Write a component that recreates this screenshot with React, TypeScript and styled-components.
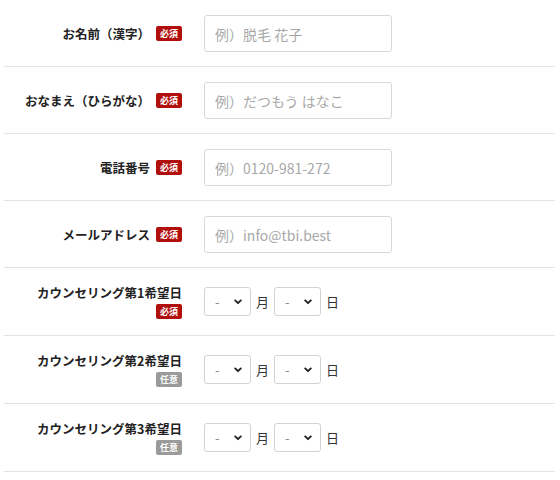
import styled, { createGlobalStyle } from 'styled-components';

const GlobalStyle = createGlobalStyle`
    body {
        margin: 0;
        background: #fff;
        font-family: "Noto Sans CJK JP", "Noto Sans", sans-serif;
        color: #222;
    }
`;

const Form = styled.form`
    width: 551px;
    margin-left: 4px;
`;

const Row = styled.div<{ $tall?: boolean }>`
    display: flex;
    align-items: center;
    padding: 15px 0 ${p => (p.$tall ? '15px' : '14px')};
    border-bottom: 1px solid #e4e4e4;
    min-height: 37px;
`;

const Label = styled.div<{ $stacked?: boolean }>`
    width: 178px;
    flex-shrink: 0;
    display: flex;
    flex-direction: ${p => (p.$stacked ? 'column' : 'row')};
    justify-content: flex-end;
    align-items: ${p => (p.$stacked ? 'flex-end' : 'center')};
    gap: ${p => (p.$stacked ? '3px' : '6px')};
    font-size: 12.5px;
    font-weight: 700;
    line-height: 16px;
    white-space: nowrap;
`;

const Badge = styled.span<{ $optional?: boolean }>`
    display: inline-flex;
    align-items: center;
    justify-content: center;
    width: 26px;
    height: 15px;
    border-radius: 2px;
    background: ${p => (p.$optional ? '#9a9a9a' : '#b10f0b')};
    color: #fff;
    font-size: 9px;
    font-weight: 700;
    line-height: 1;
`;

const Field = styled.div`
    margin-left: 22px;
    display: flex;
    align-items: center;
    gap: 5px;
    font-size: 13px;
    color: #333;
`;

const TextInput = styled.input`
    box-sizing: border-box;
    width: 188px;
    height: 37px;
    padding: 0 10px;
    border: 1px solid #d8d8d8;
    border-radius: 3px;
    font-family: inherit;
    font-size: 14px;
    color: #333;
    outline: none;

    &::placeholder {
        color: #a8a8a8;
    }
`;

const SelectWrap = styled.div`
    position: relative;
    width: 47px;
    height: 29px;

    svg {
        position: absolute;
        right: 9px;
        top: 50%;
        transform: translateY(-50%);
        pointer-events: none;
    }
`;

const Select = styled.select`
    box-sizing: border-box;
    appearance: none;
    width: 100%;
    height: 100%;
    padding: 0 0 0 10px;
    border: 1px solid #d2d2d2;
    border-radius: 3px;
    background: #fff;
    font-family: inherit;
    font-size: 13px;
    color: #888;
    outline: none;
`;

const Unit = styled.span`
    font-size: 13px;
    color: #333;
`;

const Chevron = () => (
    <svg width="8" height="6" viewBox="0 0 8 6">
        <path d="M1.2 1.4 L4 4.2 L6.8 1.4" fill="none" stroke="#222" strokeWidth="1.9" strokeLinecap="round" strokeLinejoin="round" />
    </svg>
);

const DateSelect = () => (
    <SelectWrap>
        <Select defaultValue="">
            <option value="">-</option>
        </Select>
        <Chevron />
    </SelectWrap>
);

const textRows = [
    { label: 'お名前（漢字）', placeholder: '例）脱毛 花子' },
    { label: 'おなまえ（ひらがな）', placeholder: '例）だつもう はなこ' },
    { label: '電話番号', placeholder: '例）0120-981-272' },
    { label: 'メールアドレス', placeholder: '例）info@tbi.best' },
];

const dateRows = [
    { label: 'カウンセリング第1希望日', required: true },
    { label: 'カウンセリング第2希望日', required: false },
    { label: 'カウンセリング第3希望日', required: false },
];

export default function App() {
    return (
        <>
            <GlobalStyle />
            <Form>
                {textRows.map(row => (
                    <Row key={row.label}>
                        <Label>
                            <span>{row.label}</span>
                            <Badge>必須</Badge>
                        </Label>
                        <Field>
                            <TextInput placeholder={row.placeholder} />
                        </Field>
                    </Row>
                ))}
                {dateRows.map(row => (
                    <Row key={row.label} $tall>
                        <Label $stacked>
                            <span>{row.label}</span>
                            <Badge $optional={!row.required}>{row.required ? '必須' : '任意'}</Badge>
                        </Label>
                        <Field>
                            <DateSelect />
                            <Unit>月</Unit>
                            <DateSelect />
                            <Unit>日</Unit>
                        </Field>
                    </Row>
                ))}
            </Form>
        </>
    );
}
